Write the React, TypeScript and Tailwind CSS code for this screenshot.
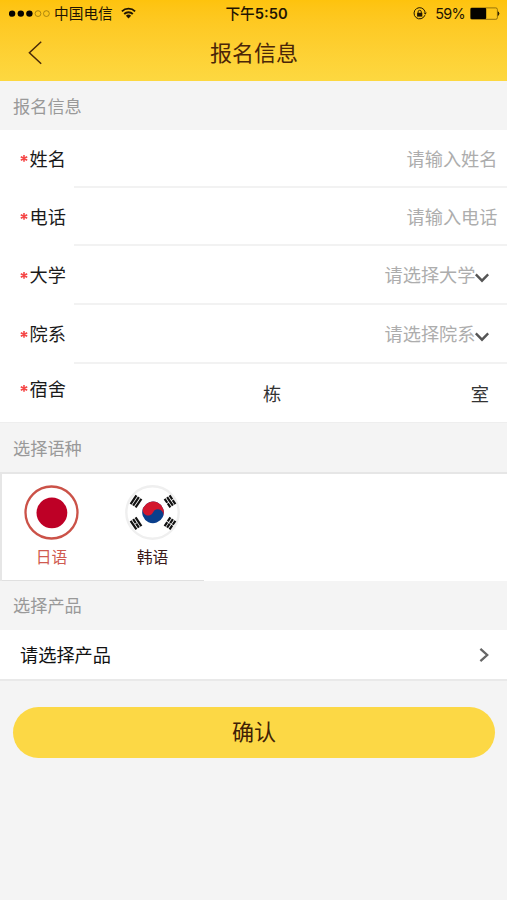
import { useState } from 'react';

interface FieldRowProps {
  label: string;
  placeholder: string;
  select?: boolean;
  heightClass: string;
}

// 状态栏
function StatusBar() {
  return (
    <div className="grid h-[27px] grid-cols-3 items-center text-[14.7px] text-[#1f1503]">
      <div className="flex items-center pl-[9px]">
        <svg width="42" height="8" viewBox="0 0 42 8">
          {[3.1, 11.8, 20.4].map((cx) => (
            <circle key={cx} cx={cx} cy="3.6" r="3.2" fill="#050300" />
          ))}
          {[29, 37.4].map((cx) => (
            <circle key={cx} cx={cx} cy="3.6" r="2.9" fill="none" stroke="#8a6a08" strokeWidth="0.7" />
          ))}
        </svg>
        <span className="ml-[3px] pt-px whitespace-nowrap leading-[27px]">中国电信</span>
        <svg className="mb-[2px] ml-[8px] shrink-0" width="15" height="12" viewBox="0 0 15 12" fill="none" stroke="#1f1503">
          <path d="M0.9 4.4a9.3 9.3 0 0 1 13.2 0" strokeWidth="1.8" />
          <path d="M3.2 7a6.1 6.1 0 0 1 8.6 0" strokeWidth="1.8" />
          <path d="M4.9 8.8a3.7 3.7 0 0 1 5.2 0L7.5 11.6z" fill="#1f1503" stroke="none" />
        </svg>
      </div>
      <div className="pt-px pl-[6px] text-center font-medium leading-[27px]">
        下午<span className="font-['Inter'] text-[14.7px] font-semibold">5:50</span>
      </div>
      <div className="flex items-center justify-end pr-[7px]">
        <svg className="mb-px" width="14" height="13" viewBox="0 0 14 13" fill="none" stroke="#1f1503">
          <path d="M11.9 8.2A5.6 5.6 0 1 1 12.1 5" strokeWidth="1" />
          <path d="M10.6 5.4h3.2l-1.6 2.4z" fill="#1f1503" stroke="none" />
          <rect x="4.1" y="5.8" width="5.2" height="3.8" fill="#1f1503" stroke="none" />
          <path d="M5.1 6V4.9a1.6 1.6 0 0 1 3.2 0V6" strokeWidth="0.9" />
        </svg>
        <span className="mb-[2px] ml-[8px] font-['Inter'] text-[14.4px] leading-[25px] tracking-[-0.7px]">59%</span>
        <svg className="mb-px ml-[5px]" width="30" height="13" viewBox="0 0 30 13">
          <rect x="0.4" y="0.9" width="27" height="11.4" rx="1.6" fill="none" stroke="#6b5006" strokeWidth="0.7" />
          <rect x="0.6" y="1.1" width="15.6" height="11" rx="1" fill="#050300" />
          <path d="M28.2 4.8q1.6 1.8 0 3.6z" fill="#1f1503" stroke="#1f1503" strokeWidth="0.8" />
        </svg>
      </div>
    </div>
  );
}

function Label({ text }: { text: string }) {
  return (
    <div className="flex w-[74px] shrink-0 items-center pl-[20px] text-[18.2px] text-[#1a1a1a]">
      <svg className="mr-[2px] shrink-0" width="8" height="8" viewBox="0 0 8 8" stroke="#f54848" strokeWidth="1.6">
        <path d="M4 0v6.8M0.8 1.7l6.4 3.6M0.8 5.3l6.4-3.6" />
      </svg>
      <span className="-ml-[0.5px] pt-[3px] whitespace-nowrap">{text}</span>
    </div>
  );
}

function FieldRow({ label, placeholder, select, heightClass }: FieldRowProps) {
  return (
    <div className={`flex ${heightClass}`}>
      <Label text={label} />
      <div className="flex flex-1 items-center justify-end border-b-2 border-[#f2f2f2] pr-[9.5px] text-[18.2px] text-[#adadad]">
        <span className="pt-[5px]">{placeholder}</span>
        {select && (
          <svg className="mt-[7px] mr-[9px] -ml-[1px]" width="14" height="10" viewBox="0 0 14 10" fill="none" stroke="#555" strokeWidth="2.4">
            <path d="M0.8 1.4L7 7.7l6.2-6.3" />
          </svg>
        )}
      </div>
    </div>
  );
}

function JapanFlag({ active }: { active: boolean }) {
  return (
    <svg width="55" height="55" viewBox="0 0 55 55">
      <circle cx="27.5" cy="27.5" r="26" fill="#fff" stroke={active ? '#cb5248' : '#efefef'} strokeWidth="2.3" />
      <circle cx="27.9" cy="27.8" r="15.4" fill="#be0026" />
    </svg>
  );
}

function KoreaFlag({ active }: { active: boolean }) {
  // 四卦: 位置、角度、断开的爻
  const trigrams = [
    { x: 11, y: 16.4, angle: -56, broken: [] as number[] },
    { x: 45, y: 16.4, angle: 56, broken: [-1, 1] },
    { x: 11, y: 38.4, angle: 56, broken: [0] },
    { x: 45, y: 38.4, angle: -56, broken: [-1, 0, 1] },
  ];
  return (
    <svg width="55" height="55" viewBox="0 0 55 55">
      <circle cx="27.5" cy="27.5" r="26.2" fill="#fff" stroke={active ? '#cb5248' : '#efefef'} strokeWidth="2.4" />
      <g transform="rotate(25 28 27.4)">
        <circle cx="28" cy="27.4" r="10.8" fill="#0a3f8c" />
        <path d="M17.2 27.4a10.8 10.8 0 0 1 21.6 0a5.4 5.4 0 0 0-10.8 0a5.4 5.4 0 0 1-10.8 0z" fill="#d3172e" />
      </g>
      {trigrams.map((t) => (
        <g key={`${t.x}-${t.y}`} transform={`translate(${t.x} ${t.y}) rotate(${t.angle})`}>
          {[-1, 0, 1].map((n) => (
            <path
              key={n}
              d={t.broken.includes(n) ? 'M-5.2 0h4.8M0.4 0h4.8' : 'M-5.2 0h10.4'}
              transform={`translate(0 ${n * 3})`}
              stroke="#111"
              strokeWidth="2.2"
            />
          ))}
        </g>
      ))}
    </svg>
  );
}

function SectionTitle({ text, className }: { text: string; className: string }) {
  return <h2 className={`flex items-center pl-[13px] text-[17.2px] text-[#999] ${className}`}>{text}</h2>;
}

export default function App() {
  const [language, setLanguage] = useState('ja');

  return (
    <div className="min-h-[900px] w-full bg-[#f4f4f4] font-['Liberation_Sans','Noto_Sans_CJK_SC',sans-serif]">
      <header className="h-[81px] bg-linear-to-b from-[#fec30d] to-[#fdd840]">
        <StatusBar />
        <div className="grid h-[52px] grid-cols-[60px_1fr_60px] items-center">
          <button className="pl-[28px]" aria-label="返回">
            <svg width="14" height="24" viewBox="0 0 14 24" fill="none" stroke="#4a2a08" strokeWidth="1.5">
              <path d="M13.2 0.7L1.4 11.8l11.8 11" />
            </svg>
          </button>
          <h1 className="pt-[2px] pl-px text-center text-[22px] leading-[50px] text-[#4a2608]">报名信息</h1>
        </div>
      </header>

      <SectionTitle text="报名信息" className="h-[49px] pt-[4px]" />
      <div className="bg-white">
        <FieldRow label="姓名" placeholder="请输入姓名" heightClass="h-[58px]" />
        <FieldRow label="电话" placeholder="请输入电话" heightClass="h-[58px]" />
        <FieldRow label="大学" placeholder="请选择大学" heightClass="h-[59px]" select />
        <FieldRow label="院系" placeholder="请选择院系" heightClass="h-[59px]" select />
        <div className="flex h-[58px] text-[18.2px] text-[#333]">
          <div className="flex pb-[8px]">
            <Label text="宿舍" />
          </div>
          <div className="flex flex-1 items-center justify-between pt-[5px] pr-[18px] pl-[189px]">
            <span>栋</span>
            <span>室</span>
          </div>
        </div>
      </div>

      <SectionTitle text="选择语种" className="h-[50px] border-t border-[#eee] pt-[4px]" />
      <div className="flex h-[109px] border-t-2 border-l-2 border-[#e6e6e6] bg-white">
        <button
          onClick={() => setLanguage('ja')}
          className={`flex w-[101px] flex-col items-center border-b border-[#e0e0e0] pt-[11px] pr-[2px] text-[15.8px] ${language === 'ja' ? 'text-[#cf5a50]' : 'text-[#3c1a1a]'}`}
        >
          <JapanFlag active={language === 'ja'} />
          <span className="mt-[6px]">日语</span>
        </button>
        <button
          onClick={() => setLanguage('ko')}
          className={`flex w-[101px] flex-col items-center border-b border-[#e0e0e0] pt-[11px] pr-[2px] text-[15.8px] ${language === 'ko' ? 'text-[#cf5a50]' : 'text-[#3c1a1a]'}`}
        >
          <KoreaFlag active={language === 'ko'} />
          <span className="mt-[6px]">韩语</span>
        </button>
      </div>

      <SectionTitle text="选择产品" className="h-[49px] pt-[3px]" />
      <div className="flex h-[51px] items-center justify-between border-b-2 border-[#e9e9e9] bg-white pr-[18px] pl-[20px] text-[18.2px] text-[#111]">
        <span className="pt-[4px]">请选择产品</span>
        <svg width="10" height="14" viewBox="0 0 10 14" fill="none" stroke="#666" strokeWidth="2.3">
          <path d="M1.4 0.9L8.2 7l-6.8 6.1" />
        </svg>
      </div>

      <div className="pt-[26px] pr-[12px] pl-[13px]">
        <button className="h-[51px] w-full rounded-full bg-[#fcd845] text-[22px] text-[#3f2106]">确认</button>
      </div>
    </div>
  );
}
